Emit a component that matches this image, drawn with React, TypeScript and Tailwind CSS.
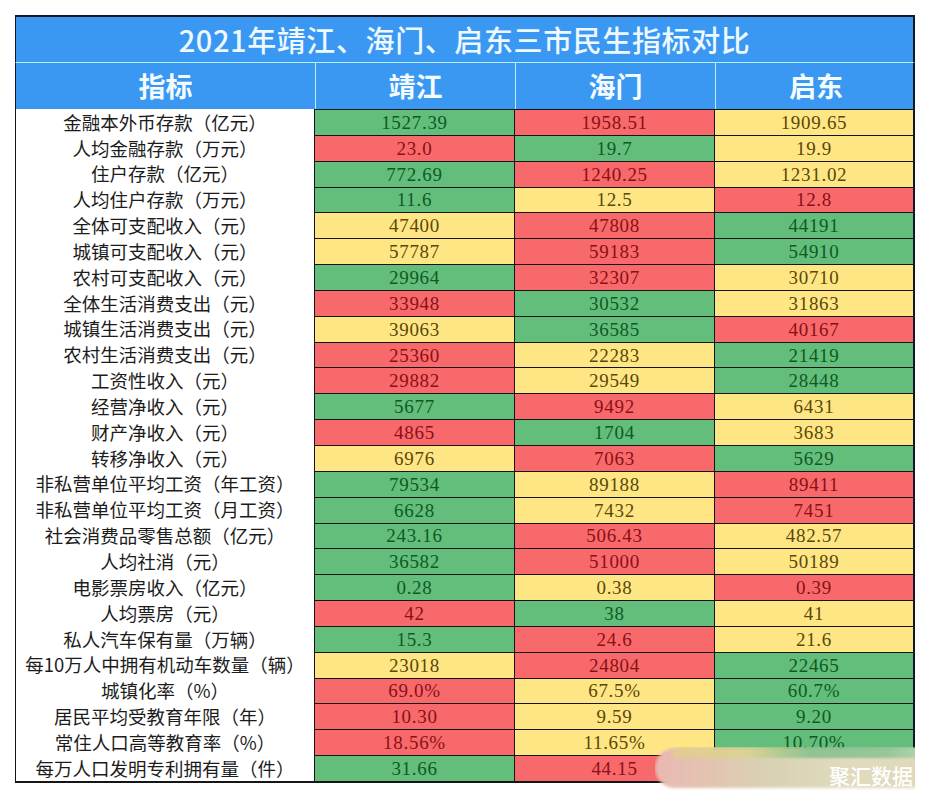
import React from "react"

type C = "G" | "R" | "Y"

const rows: [string, [string, C], [string, C], [string, C]][] = [
    ["金融本外币存款（亿元）", ["1527.39", "G"], ["1958.51", "R"], ["1909.65", "Y"]],
    ["人均金融存款（万元）", ["23.0", "R"], ["19.7", "G"], ["19.9", "Y"]],
    ["住户存款（亿元）", ["772.69", "G"], ["1240.25", "R"], ["1231.02", "Y"]],
    ["人均住户存款（万元）", ["11.6", "G"], ["12.5", "Y"], ["12.8", "R"]],
    ["全体可支配收入（元）", ["47400", "Y"], ["47808", "R"], ["44191", "G"]],
    ["城镇可支配收入（元）", ["57787", "Y"], ["59183", "R"], ["54910", "G"]],
    ["农村可支配收入（元）", ["29964", "G"], ["32307", "R"], ["30710", "Y"]],
    ["全体生活消费支出（元）", ["33948", "R"], ["30532", "G"], ["31863", "Y"]],
    ["城镇生活消费支出（元）", ["39063", "Y"], ["36585", "G"], ["40167", "R"]],
    ["农村生活消费支出（元）", ["25360", "R"], ["22283", "Y"], ["21419", "G"]],
    ["工资性收入（元）", ["29882", "R"], ["29549", "Y"], ["28448", "G"]],
    ["经营净收入（元）", ["5677", "G"], ["9492", "R"], ["6431", "Y"]],
    ["财产净收入（元）", ["4865", "R"], ["1704", "G"], ["3683", "Y"]],
    ["转移净收入（元）", ["6976", "Y"], ["7063", "R"], ["5629", "G"]],
    ["非私营单位平均工资（年工资）", ["79534", "G"], ["89188", "Y"], ["89411", "R"]],
    ["非私营单位平均工资（月工资）", ["6628", "G"], ["7432", "Y"], ["7451", "R"]],
    ["社会消费品零售总额（亿元）", ["243.16", "G"], ["506.43", "R"], ["482.57", "Y"]],
    ["人均社消（元）", ["36582", "G"], ["51000", "R"], ["50189", "Y"]],
    ["电影票房收入（亿元）", ["0.28", "G"], ["0.38", "Y"], ["0.39", "R"]],
    ["人均票房（元）", ["42", "R"], ["38", "G"], ["41", "Y"]],
    ["私人汽车保有量（万辆）", ["15.3", "G"], ["24.6", "R"], ["21.6", "Y"]],
    ["每10万人中拥有机动车数量（辆）", ["23018", "Y"], ["24804", "R"], ["22465", "G"]],
    ["城镇化率（%）", ["69.0%", "R"], ["67.5%", "Y"], ["60.7%", "G"]],
    ["居民平均受教育年限（年）", ["10.30", "R"], ["9.59", "Y"], ["9.20", "G"]],
    ["常住人口高等教育率（%）", ["18.56%", "R"], ["11.65%", "Y"], ["10.70%", "G"]],
    ["每万人口发明专利拥有量（件）", ["31.66", "G"], ["44.15", "R"], ["", "Y"]],
]

const cellColor: Record<C, string> = {
    G: "bg-[#63be7b] text-[#0f5a24]",
    R: "bg-[#f8696b] text-[#8a1016]",
    Y: "bg-[#ffe685] text-[#5a4808]",
}

function Cell({ value, color, last }: { value: string; color: C; last?: boolean }) {
    return (
        <div
            className={`${cellColor[color]} flex items-center justify-center border-t border-l border-[#151515] ${last ? "border-r-2 border-r-[#101828]" : ""} font-['Liberation_Serif',serif] text-[19px] leading-none tracking-[0.7px]`}
        >
            {value}
        </div>
    )
}

export default function App() {
    return (
        <div className="relative w-[930px] h-[798px] bg-white font-['Noto_Sans_CJK_SC',sans-serif]">
            <div className="absolute left-[15px] top-[15px] w-[900px]">
                {/* title */}
                <div className="h-[47px] bg-[#3a98f2] border-t-2 border-l border-r-2 border-[#101828] flex items-center justify-center text-[29px] text-[#eef8ff] font-medium tracking-[0.6px]">
                    2021年靖江、海门、启东三市民生指标对比
                </div>
                {/* header */}
                <div className="h-[47px] grid grid-cols-[299px_200px_200px_201px] bg-[#3a98f2] border-t border-t-[#b4f2f6] border-l border-l-[#101828] border-r-2 border-r-[#101828] text-[27px] font-bold text-[#f4fbff]">
                    <div className="flex items-center justify-center">指标</div>
                    <div className="flex items-center justify-center border-l border-[#b4f2f6]">靖江</div>
                    <div className="flex items-center justify-center border-l border-[#b4f2f6]">海门</div>
                    <div className="flex items-center justify-center border-l border-[#b4f2f6]">启东</div>
                </div>
                {/* body */}
                <div className="h-[674px] flex flex-col border-l border-b-2 border-[#151515]">
                    {rows.map(([label, a, b, c]) => (
                        <div key={label} className="flex-1 grid grid-cols-[298px_200px_200px_201px]">
                            <div className="flex items-center justify-center text-[18.5px] text-[#1c1c1c] leading-none">
                                {label}
                            </div>
                            <Cell value={a[0]} color={a[1]} />
                            <Cell value={b[0]} color={b[1]} />
                            <Cell value={c[0]} color={c[1]} last />
                        </div>
                    ))}
                </div>
            </div>

            {/* watermark */}
            <div className="absolute left-[655px] top-[747px] w-[260px] h-[44px] overflow-hidden">
                <div className="absolute left-0 top-[1px] w-[300px] h-[40px] rounded-l-[22px] rounded-r-[8px] bg-[linear-gradient(90deg,#eab8b2_0%,#e2c4b0_18%,#d9d3b4_40%,#e0dbbe_65%,#ddd8b8_100%)] blur-[1.5px]" />
                <div className="absolute left-[18px] top-0 w-[250px] h-[11px] rounded-tl-[12px] rounded-tr-[16px] bg-[linear-gradient(90deg,#e4cf8c,#dad48e_30%,#7fbe8a_55%,#86c290_85%,#a9d4ae)] blur-[1px] opacity-80" />
                <div className="absolute right-[2px] top-[18px] text-[21px] leading-none text-white font-medium whitespace-nowrap">
                    聚汇数据
                </div>
            </div>
        </div>
    )
}
